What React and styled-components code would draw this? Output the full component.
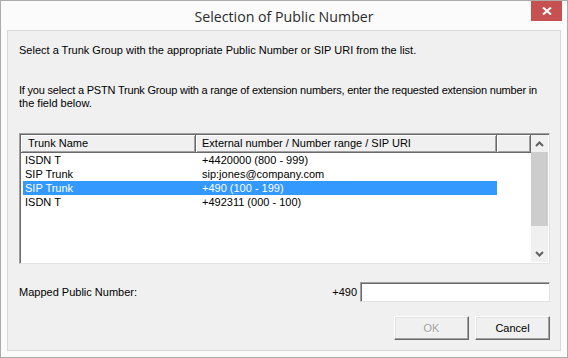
import React from "react";
import styled, { createGlobalStyle } from "styled-components";

const GlobalStyle = createGlobalStyle`
  body {
    margin: 0;
    font-family: "Liberation Sans", Arial, sans-serif;
    font-size: 11px;
    color: #000;
  }
`;

const Window = styled.div`
  box-sizing: border-box;
  width: 568px;
  height: 358px;
  border: 1px solid #ababab;
  background: #fbfbfb;
  padding: 0 6px 6px 6px;
  display: flex;
  flex-direction: column;
`;

const TitleBar = styled.div`
  height: 29px;
  display: grid;
  grid-template-columns: 1fr auto 1fr;
  margin: 0 -6px;
`;

const Title = styled.div`
  grid-column: 2;
  align-self: center;
  font-family: "Open Sans", "Liberation Sans", sans-serif;
  font-size: 14.2px;
  color: #2b2b2b;
  padding-top: 2px;
`;

const CloseButton = styled.div`
  grid-column: 3;
  justify-self: end;
  align-self: start;
  width: 31px;
  height: 20px;
  margin-right: 5px;
  background: #c75050;
  display: flex;
  align-items: center;
  justify-content: center;
`;

const Client = styled.div`
  flex: 1;
  border: 1px solid #d9d9d9;
  background: #f0f0f0;
  padding: 13px 10px 0 11px;
  display: flex;
  flex-direction: column;
`;

const Text = styled.p`
  margin: 0 0 ${(p) => p.$gap || 0}px 0;
  line-height: 13px;
  white-space: nowrap;
  letter-spacing: ${(p) => (p.$tight ? "-0.2px" : "normal")};
`;

const ListBox = styled.div`
  height: 131px;
  box-sizing: border-box;
  border: 1px solid;
  border-color: #a0a0a0 #e3e3e3 #e3e3e3 #a0a0a0;
  box-shadow: inset 1px 1px #696969, inset -1px -1px #ffffff;
  padding: 1px;
  display: grid;
  grid-template-columns: 1fr 17px;
  background: #fff;
`;

const Table = styled.div`
  display: flex;
  flex-direction: column;
`;

const HeaderRow = styled.div`
  display: grid;
  grid-template-columns: 175px 301px 34px;
  height: 18px;
`;

const HeaderCell = styled.div`
  box-sizing: border-box;
  background: #f0f0f0;
  border-right: 1px solid #696969;
  border-bottom: 1px solid #696969;
  box-shadow: inset 1px 1px #ffffff, inset -1px -1px #a0a0a0;
  padding: 2px 0 0 ${(p) => p.$pad}px;
  line-height: 13px;
  white-space: nowrap;
  overflow: hidden;
`;

const Row = styled.div`
  display: grid;
  grid-template-columns: 173px 301px;
  width: 474px;
  margin-left: 2px;
  height: 14px;
  line-height: 14px;
  background: ${(p) => (p.$selected ? "#3399ff" : "transparent")};
  color: ${(p) => (p.$selected ? "#fff" : "#000")};
`;

const Cell = styled.div`
  padding-left: ${(p) => p.$pad}px;
  white-space: nowrap;
`;

const ScrollBar = styled.div`
  background: #f0f0f0;
  display: flex;
  flex-direction: column;
`;

const ScrollArrow = styled.div`
  height: 17px;
  display: flex;
  align-items: center;
  justify-content: center;
`;

const Thumb = styled.div`
  height: 74px;
  background: #cdcdcd;
`;

const Track = styled.div`
  flex: 1;
`;

const MappedRow = styled.div`
  display: flex;
  align-items: center;
  margin-top: 18px;
  height: 20px;
`;

const Label = styled.span`
  flex: 1;
`;

const Prefix = styled.span`
  margin-right: 3px;
`;

const Input = styled.div`
  box-sizing: border-box;
  width: 190px;
  height: 20px;
  background: #fff;
  border: 1px solid;
  border-color: #a0a0a0 #e3e3e3 #e3e3e3 #a0a0a0;
  box-shadow: inset 1px 1px #696969, inset -1px -1px #ffffff;
`;

const ButtonRow = styled.div`
  display: flex;
  justify-content: flex-end;
  gap: 6px;
  margin-top: 14px;
`;

const Button = styled.div`
  box-sizing: border-box;
  width: 75px;
  height: 24px;
  background: #f0f0f0;
  border: 1px solid;
  border-color: #ffffff #696969 #696969 #ffffff;
  box-shadow: inset -1px -1px #a0a0a0, inset 1px 1px #e3e3e3;
  display: flex;
  align-items: center;
  justify-content: center;
  color: ${(p) => (p.$disabled ? "#a0a0a0" : "#000")};
  text-shadow: ${(p) => (p.$disabled ? "1px 1px #ffffff" : "none")};
`;

const Chevron = ({ up }) => (
  <svg width="9" height="6" viewBox="0 0 9 6">
    <path
      d={up ? "M1 5 L4.5 1.5 L8 5" : "M1 1 L4.5 4.5 L8 1"}
      fill="none"
      stroke="#606060"
      strokeWidth="2"
    />
  </svg>
);

const trunks = [
  { name: "ISDN T", number: "+4420000 (800 - 999)" },
  { name: "SIP Trunk", number: "sip:jones@company.com" },
  { name: "SIP Trunk", number: "+490 (100 - 199)", selected: true },
  { name: "ISDN T", number: "+492311 (000 - 100)" },
];

export default function App() {
  return (
    <>
      <GlobalStyle />
      <Window>
        <TitleBar>
          <Title>Selection of Public Number</Title>
          <CloseButton>
            <svg width="10" height="8" viewBox="0 0 10 8">
              <path d="M1 0.5 L9 7.5 M9 0.5 L1 7.5" stroke="#fff" strokeWidth="2" />
            </svg>
          </CloseButton>
        </TitleBar>
        <Client>
          <Text $gap={27}>
            Select a Trunk Group with the appropriate Public Number or SIP URI from the list.
          </Text>
          <Text $tight>
            If you select a PSTN Trunk Group with a range of extension numbers, enter the requested extension number in
          </Text>
          <Text $gap={23}>the field below.</Text>
          <ListBox>
            <Table>
              <HeaderRow>
                <HeaderCell $pad={7}>Trunk Name</HeaderCell>
                <HeaderCell $pad={6}>External number / Number range / SIP URI</HeaderCell>
                <HeaderCell $pad={0} />
              </HeaderRow>
              {trunks.map((t, i) => (
                <Row key={i} $selected={t.selected}>
                  <Cell $pad={2}>{t.name}</Cell>
                  <Cell $pad={6}>{t.number}</Cell>
                </Row>
              ))}
            </Table>
            <ScrollBar>
              <ScrollArrow>
                <Chevron up />
              </ScrollArrow>
              <Thumb />
              <Track />
              <ScrollArrow>
                <Chevron />
              </ScrollArrow>
            </ScrollBar>
          </ListBox>
          <MappedRow>
            <Label>Mapped Public Number:</Label>
            <Prefix>+490</Prefix>
            <Input />
          </MappedRow>
          <ButtonRow>
            <Button $disabled>OK</Button>
            <Button>Cancel</Button>
          </ButtonRow>
        </Client>
      </Window>
    </>
  );
}
